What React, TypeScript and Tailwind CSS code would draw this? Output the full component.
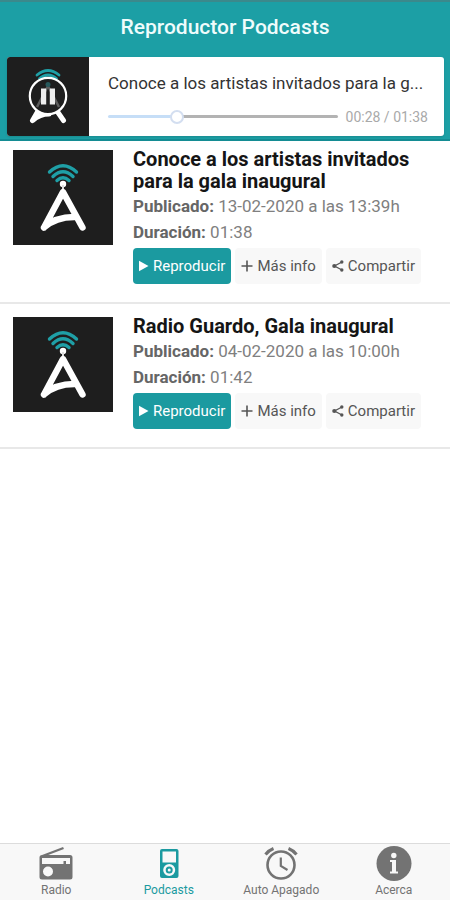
import { useState } from "react";

interface Episode {
  id: number;
  title: string;
  published: string;
  duration: string;
}

interface Tab {
  id: string;
  label: string;
  icon: React.ReactNode;
}

const episodes: Episode[] = [
  {
    id: 1,
    title: "Conoce a los artistas invitados para la gala inaugural",
    published: "13-02-2020 a las 13:39h",
    duration: "01:38",
  },
  {
    id: 2,
    title: "Radio Guardo, Gala inaugural",
    published: "04-02-2020 a las 10:00h",
    duration: "01:42",
  },
];

const TOTAL_SECONDS = 98;
const MAX_TITLE = 41;

function formatTime(seconds: number) {
  const m = String(Math.floor(seconds / 60)).padStart(2, "0");
  const s = String(seconds % 60).padStart(2, "0");
  return `${m}:${s}`;
}

function shorten(title: string) {
  return title.length > MAX_TITLE ? `${title.slice(0, MAX_TITLE)}...` : title;
}

function AntennaLogo() {
  return (
    <svg viewBox="0 0 100 95" className="h-[95px] w-[100px] shrink-0 bg-[#1e1e1e]" aria-hidden="true">
      <g fill="none" stroke="#1f9fa6" strokeWidth="3.4" strokeLinecap="round">
        <path d="M36.500 22Q50 9.500 63.500 22" />
        <path d="M40 26.500Q50 17 60 26.500" />
        <path d="M44 30.500Q50 25 56 30.500" />
      </g>
      <circle cx="50" cy="34" r="3.2" fill="#fff" />
      <path d="M50 35V42" stroke="#ddd" strokeWidth="2" />
      <path
        d="M31 77.500L50 42L69.500 77.500M31 77.500Q43 66.500 63 67"
        fill="none"
        stroke="#fff"
        strokeWidth="6.4"
        strokeLinecap="round"
        strokeLinejoin="round"
      />
    </svg>
  );
}

function PausedLogo() {
  return (
    <svg viewBox="0 0 82 79" className="h-[79px] w-[82px]" aria-hidden="true">
      <g fill="none" stroke="#1f9fa6" strokeWidth="2.8" strokeLinecap="round">
        <path d="M30 18Q41 9 52 18" />
        <path d="M32.500 21.500Q41 14.500 49.500 21.500" />
      </g>
      <path d="M31 54L25.500 63.500M50 54L56.500 63.500M25.500 63.500Q33 57 42 57" fill="none" stroke="#fff" strokeWidth="5" strokeLinecap="round" />
      <circle cx="41" cy="39" r="18.200" fill="#1e1e1e" stroke="#fff" strokeWidth="2.2" />
      <path d="M41 29L30 50M41 29L52 50" fill="none" stroke="#5c5c5c" strokeWidth="2.500" />
      <circle cx="41" cy="27.500" r="2.500" fill="#27595c" />
      <path d="M34 31.500H39.200V47.500H34ZM42.800 31.500H48V47.500H42.800Z" fill="#ececec" />
    </svg>
  );
}

function PlayIcon() {
  return (
    <svg viewBox="0 0 10 12" className="h-3 w-2.5" fill="currentColor" aria-hidden="true">
      <path d="M0 0.800L9.500 6L0 11.200Z" />
    </svg>
  );
}

function PlusIcon() {
  return (
    <svg viewBox="0 0 12 12" className="size-3" stroke="currentColor" strokeWidth="1.600" aria-hidden="true">
      <path d="M6 0.500V11.500M0.500 6H11.500" />
    </svg>
  );
}

function ShareIcon() {
  return (
    <svg viewBox="0 0 12 12" className="size-3" fill="currentColor" aria-hidden="true">
      <path d="M10 2L2.500 6L10 10" fill="none" stroke="currentColor" strokeWidth="1.300" />
      <circle cx="2.300" cy="6" r="2.100" />
      <circle cx="9.800" cy="2" r="1.700" />
      <circle cx="9.800" cy="10" r="1.700" />
    </svg>
  );
}

const tabs: Tab[] = [
  {
    id: "radio",
    label: "Radio",
    icon: (
      <svg viewBox="0 0 36 36" className="size-9" aria-hidden="true">
        <path d="M4.500 10L25.500 2" stroke="currentColor" strokeWidth="2.400" />
        <path
          fill="currentColor"
          fillRule="evenodd"
          d="M4 9H32Q34.500 9 34.500 11.500V31Q34.500 33.500 32 33.500H4Q1.500 33.500 1.500 31V11.500Q1.500 9 4 9ZM4 12V18H25.500V15H28V18H32V12ZM10 20.500A5 5 0 1 0 10 30.500A5 5 0 1 0 10 20.500Z"
        />
      </svg>
    ),
  },
  {
    id: "podcasts",
    label: "Podcasts",
    icon: (
      <svg viewBox="0 0 36 36" className="size-9" aria-hidden="true">
        <path
          fill="currentColor"
          fillRule="evenodd"
          d="M11 3H25.500Q27.500 3 27.500 5V30Q27.500 32 25.500 32H11Q9 32 9 30V5Q9 3 11 3ZM11.500 5.500V16.500H25V5.500ZM18.200 18A6 6 0 1 0 18.200 30A6 6 0 1 0 18.200 18ZM18.200 20.500A3.500 3.500 0 1 1 18.200 27.500A3.500 3.500 0 1 1 18.200 20.500ZM18.200 22.500A1.500 1.500 0 1 0 18.200 25.500A1.500 1.500 0 1 0 18.200 22.500Z"
        />
      </svg>
    ),
  },
  {
    id: "sleep",
    label: "Auto Apagado",
    icon: (
      <svg viewBox="0 0 36 36" className="size-9" fill="none" stroke="currentColor" aria-hidden="true">
        <circle cx="18" cy="19" r="13.500" strokeWidth="2.600" />
        <path d="M17.800 11.500V20L24.500 24" strokeWidth="2.200" />
        <path d="M2.500 8.500Q5.500 4.500 10.500 2.500M33.500 8.500Q30.500 4.500 25.500 2.500" strokeWidth="3" />
      </svg>
    ),
  },
  {
    id: "about",
    label: "Acerca",
    icon: (
      <svg viewBox="0 0 36 36" className="size-9" aria-hidden="true">
        <circle cx="18" cy="17.500" r="17.500" fill="currentColor" />
        <circle cx="17.800" cy="9.500" r="2.700" fill="#f8f8f8" />
        <path d="M14 14H20V25.500H22V27.500H14V25.500H16V16H14Z" fill="#f8f8f8" />
      </svg>
    ),
  },
];

function Player() {
  const [position, setPosition] = useState(28);
  const filled = `${(position / TOTAL_SECONDS) * 100}%`;

  return (
    <section className="mr-1.5 ml-[7px] flex overflow-hidden rounded-[3px] bg-white shadow-sm">
      <button type="button" aria-label="Pausar" className="shrink-0 bg-[#1e1e1e]">
        <PausedLogo />
      </button>
      <div className="flex min-w-0 flex-1 flex-col justify-center gap-3.5 pt-0.5 pr-3 pl-[19px]">
        <p className="text-[17px] leading-6 whitespace-nowrap text-[#333]">{shorten(episodes[0].title)}</p>
        <div className="flex items-center gap-2">
          <input
            type="range"
            aria-label="Posición"
            min={0}
            max={TOTAL_SECONDS}
            value={position}
            onChange={(e) => setPosition(Number(e.target.value))}
            className="h-[3px] min-w-0 flex-1 appearance-none rounded-full [&::-webkit-slider-thumb]:size-3.5 [&::-webkit-slider-thumb]:appearance-none [&::-webkit-slider-thumb]:rounded-full [&::-webkit-slider-thumb]:border-2 [&::-webkit-slider-thumb]:border-[#d3def0] [&::-webkit-slider-thumb]:bg-white"
            style={{ background: `linear-gradient(to right, #c6def7 ${filled}, #b3b3b3 ${filled})` }}
          />
          <span className="pr-1 text-sm leading-4 text-[#a9a9a9]">
            {formatTime(position)} / {formatTime(TOTAL_SECONDS)}
          </span>
        </div>
      </div>
    </section>
  );
}

function EpisodeRow({ episode }: { episode: Episode }) {
  const secondary =
    "flex h-9 items-center gap-1 rounded-sm bg-[#f8f8f8] px-1.5 text-[15px] text-[#555]";
  return (
    <li className="flex gap-5 border-b-2 border-[#e8e8e8] px-[13px] pt-[11px] pb-[18px]">
      <div className="mt-0.5">
        <AntennaLogo />
      </div>
      <div className="min-w-0 flex-1">
        <h2 className="text-xl leading-[22px] font-bold text-[#151515]">{episode.title}</h2>
        <p className="mt-px text-[17px] leading-[26px] text-[#808080]">
          <b className="font-bold text-[#666]">Publicado:</b> {episode.published}
        </p>
        <p className="text-[17px] leading-[26px] text-[#808080]">
          <b className="font-bold text-[#666]">Duración:</b> {episode.duration}
        </p>
        <div className="mt-[3px] flex gap-1">
          <button
            type="button"
            className="flex h-9 items-center gap-1 rounded-sm bg-[#1b9aa0] px-1.5 text-[15px] text-white"
          >
            <PlayIcon />
            Reproducir
          </button>
          <button type="button" className={secondary}>
            <PlusIcon />
            Más info
          </button>
          <button type="button" className={secondary}>
            <ShareIcon />
            Compartir
          </button>
        </div>
      </div>
    </li>
  );
}

export default function App() {
  const [active, setActive] = useState("podcasts");

  return (
    <div className="flex min-h-screen flex-col bg-white font-[Roboto,sans-serif]">
      <header className="relative z-10 border-t-2 border-b-2 border-t-[#3b898c] border-b-[#148c93] bg-[#1c9fa5] pb-[3px]">
        <h1 className="pt-[11px] pb-4 text-center text-[21px] leading-7 font-medium text-[#effcfc]">
          Reproductor Podcasts
        </h1>
        <Player />
      </header>

      <main className="-mt-1 flex-1">
        <ul>
          {episodes.map((episode) => (
            <EpisodeRow key={episode.id} episode={episode} />
          ))}
        </ul>
      </main>

      <nav className="sticky bottom-0 grid grid-cols-4 border-t border-[#dcdcdc] bg-[#f8f8f8]">
        {tabs.map((tab) => (
          <button
            key={tab.id}
            type="button"
            onClick={() => setActive(tab.id)}
            className={`flex flex-col items-center py-0.5 text-xs leading-4 ${
              active === tab.id ? "text-[#1b9aa0]" : "text-[#737373]"
            }`}
          >
            {tab.icon}
            {tab.label}
          </button>
        ))}
      </nav>
    </div>
  );
}
